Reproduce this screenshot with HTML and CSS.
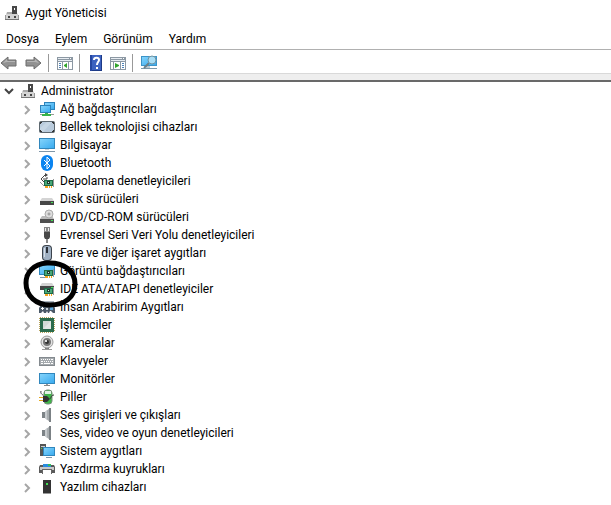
FILE: index.html
```html
<!DOCTYPE html>
<html lang="tr">
<head>
    <meta charset="UTF-8">
    <meta name="viewport" content="width=device-width, initial-scale=1.0">
    <title>Aygıt Yöneticisi</title>
    <link rel="stylesheet" href="styles.css">
</head>
<body>
    <!-- shared icons -->
    <svg class="sprite" aria-hidden="true">
        <symbol id="device" viewBox="0 0 16 16">
            <path d="M8 1h5v8H8z" fill="#484848"/><path d="M10 3h1v2h-1z" fill="#fff"/>
            <path d="M3 7h5v2h5v-1l1 2H2z" fill="#aaa"/><path d="M2 9h12v5H2z" fill="#d4d4d4"/>
            <path d="M1 10h1v4H1zM14 10h1v4h-1z" fill="#999"/><path d="M1 14h14v1H1z" fill="#777"/>
            <path d="M4 11h2v2H4zM10 11h2v2h-2z" fill="#444"/>
        </symbol>
        <symbol id="chevron" viewBox="0 0 8 10">
            <path d="M2 1l4 4-4 4" fill="none" stroke="#a6a6a6" stroke-width="2"/>
        </symbol>
        <symbol id="arrow" viewBox="0 0 18 16">
            <path d="M1 8l7-6v3h8v6H8v3z" fill="#929292" stroke="#6c6c6c" stroke-linejoin="round"/>
            <path d="M3 8l4-4v2h8v1H7z" fill="#b5b5b5"/>
        </symbol>
        <symbol id="speaker" viewBox="0 0 16 16">
            <path d="M3 5h3v6H3z" fill="#7d8387"/><path d="M6 5l5-4v14l-5-4z" fill="#a9aeb1"/>
            <path d="M6 5l2-2v10l-2-2z" fill="#c8cccf"/><path d="M10 1h2v14h-2z" fill="#7b8185"/>
        </symbol>
        <symbol id="card" viewBox="0 0 10 9">
            <path d="M0 1h9v6H0z" fill="#1d6b48"/><path d="M1 2h7v4H1z" fill="#49a878"/>
            <path d="M3 2h3v3H3z" fill="#1c3c30"/><path d="M4 3h1v1H4z" fill="#d7f5e4"/>
            <path d="M9 0h1v8H9z" fill="#999"/>
            <path d="M1 7h3v2H1zM5 7h1v2H5zM7 7h1v2H7z" fill="#f5a623"/>
        </symbol>
        <linearGradient id="screen" x1="0" y1="0" x2="1" y2="1">
            <stop offset="0" stop-color="#83d3fb"/><stop offset="1" stop-color="#3aabef"/>
        </linearGradient>
    </svg>

    <header class="title-bar">
        <svg class="icon"><use href="#device"/></svg>
        <h1>Aygıt Yöneticisi</h1>
    </header>

    <nav class="menu">
        <button type="button">Dosya</button>
        <button type="button">Eylem</button>
        <button type="button">Görünüm</button>
        <button type="button">Yardım</button>
    </nav>

    <div class="toolbar">
        <button type="button" aria-label="Geri"><svg class="arrow"><use href="#arrow"/></svg></button>
        <button type="button" aria-label="İleri"><svg class="arrow forward"><use href="#arrow"/></svg></button>
        <span class="separator"></span>
        <button type="button" aria-label="Konsol ağacını göster">
            <svg class="icon" viewBox="0 0 16 16">
                <path d="M0 2h16v13H0z" fill="#8c98a3"/><path d="M1 3h11v1H1zM1 5h14v1H1z" fill="#e8edf2"/>
                <path d="M13 3h1v1h-1z" fill="#fff"/><path d="M1 7h4v7H1zM6 7h5v7H6zM12 7h3v7h-3z" fill="#fff"/>
                <path d="M2 8h2v1H2zM2 10h2v1H2zM2 12h2v1H2z" fill="#4d83b8"/>
                <path d="M10 8v5l-3-2v-1z" fill="#31a52c"/>
            </svg>
        </button>
        <span class="separator"></span>
        <button type="button" aria-label="Yardım">
            <svg class="icon" viewBox="0 0 16 16">
                <path d="M2 0h12v16H2z" fill="#3c62c0"/><path d="M2 0h2v16H2z" fill="#2546a0"/>
                <path d="M13 0h1v16h-1zM4 15h10v1H4z" fill="#1d3a86"/>
                <path d="M6 5c0-3 5-3 5 0 0 2-2 2-2 5" fill="none" stroke="#fff" stroke-width="2"/>
                <path d="M8 12h2v2H8z" fill="#fff"/>
            </svg>
        </button>
        <button type="button" aria-label="Eylem bölmesini göster">
            <svg class="icon" viewBox="0 0 16 16">
                <path d="M0 2h16v13H0z" fill="#8c98a3"/><path d="M1 3h11v1H1zM1 5h14v1H1z" fill="#e8edf2"/>
                <path d="M13 3h1v1h-1z" fill="#fff"/><path d="M1 7h2v7H1zM4 7h6v7H4zM11 7h4v7h-4z" fill="#fff"/>
                <path d="M12 8h2v1h-2zM12 10h2v1h-2zM12 12h2v1h-2z" fill="#4d83b8"/>
                <path d="M5 8v5l4-2v-1z" fill="#31a52c"/>
            </svg>
        </button>
        <span class="separator"></span>
        <button type="button" aria-label="Donanım değişikliklerini tara">
            <svg class="icon" viewBox="0 0 16 16">
                <path d="M0 1h16v10H0z" fill="#3d94c8"/><path d="M1 2h14v8H1z" fill="url(#screen)"/>
                <path d="M5 11h4v2H5z" fill="#b9c8d1"/><path d="M0 13h16v1H0z" fill="#7c98aa"/>
                <path d="M8 8l-5 5" stroke="#6a7f88" stroke-width="2"/>
                <circle cx="11" cy="5" r="4" fill="#a9def6" stroke="#6f93a3"/>
            </svg>
        </button>
    </div>
    <div class="band"></div>

    <main class="tree">
        <div class="root">
            <button type="button" class="expander" aria-label="Daralt" aria-expanded="true">
                <svg class="chevron-down" viewBox="0 0 10 8"><path d="M1 1l4 4 4-4" fill="none" stroke="#444" stroke-width="2"/></svg>
            </button>
            <svg class="icon"><use href="#device"/></svg>
            <span>Administrator</span>
        </div>
        <ul>
            <li>
                <button type="button" class="expander" aria-label="Genişlet"><svg class="chevron"><use href="#chevron"/></svg></button>
                <svg class="icon" viewBox="0 0 16 16">
                    <path d="M5 1h11v8H5z" fill="#2c83bb"/><path d="M6 2h9v6H6z" fill="url(#screen)"/>
                    <path d="M1 4h11v8H1z" fill="#2c83bb"/><path d="M2 5h9v6H2z" fill="url(#screen)"/>
                    <path d="M6 12h3v1h3v2H3v-2h3z" fill="#37b34a"/><path d="M1 13h2v1H1zM12 13h3v1h-3z" fill="#999"/>
                </svg>
                <span>Ağ bağdaştırıcıları</span>
            </li>
            <li>
                <button type="button" class="expander" aria-label="Genişlet"><svg class="chevron"><use href="#chevron"/></svg></button>
                <svg class="icon" viewBox="0 0 16 16">
                    <rect x="0" y="2" width="16" height="12" rx="2" fill="#5d6870"/><path d="M1 3h14v10H1z" fill="#b9cbdc"/>
                    <path d="M1 9l7-6h5l-9 10H1z" fill="#c6d6e4"/>
                    <path d="M1 3h2v1H2v1H1zM13 3h2v2h-1V4h-1zM1 11h1v1h1v1H1zM14 11h1v2h-2v-1h1z" fill="#333"/>
                </svg>
                <span>Bellek teknolojisi cihazları</span>
            </li>
            <li>
                <button type="button" class="expander" aria-label="Genişlet"><svg class="chevron"><use href="#chevron"/></svg></button>
                <svg class="icon" viewBox="0 0 16 16">
                    <path d="M0 1h16v11H0z" fill="#3187bd"/><path d="M1 2h14v9H1z" fill="url(#screen)"/>
                    <path d="M6 12h4v1H6z" fill="#cad3d9"/><path d="M0 14h16v1H0z" fill="#7f96a8"/>
                </svg>
                <span>Bilgisayar</span>
            </li>
            <li>
                <button type="button" class="expander" aria-label="Genişlet"><svg class="chevron"><use href="#chevron"/></svg></button>
                <svg class="icon" viewBox="0 0 16 16">
                    <rect x="2" y="0" width="12" height="16" rx="6" fill="#0a84f0"/>
                    <path d="M5 5l6 6-3 3V2l3 3-6 6" fill="none" stroke="#fff"/>
                </svg>
                <span>Bluetooth</span>
            </li>
            <li>
                <button type="button" class="expander" aria-label="Genişlet"><svg class="chevron"><use href="#chevron"/></svg></button>
                <svg class="icon" viewBox="0 0 16 16">
                    <path d="M7 1L2 6l4 4M4 6h4V4" fill="none" stroke="#444"/>
                    <path d="M6 0l3 2-3 2z" fill="#444"/><path d="M1 9l4 4" fill="none" stroke="#999"/>
                    <use href="#card" x="5" y="6" width="10" height="9"/>
                </svg>
                <span>Depolama denetleyicileri</span>
            </li>
            <li>
                <button type="button" class="expander" aria-label="Genişlet"><svg class="chevron"><use href="#chevron"/></svg></button>
                <svg class="icon" viewBox="0 0 16 16">
                    <path d="M3 7h10l2 3H1z" fill="#d4d4d4"/><path d="M1 10h14v4H1z" fill="#464646"/><path d="M12 11h2v1h-2z" fill="#41df54"/>
                </svg>
                <span>Disk sürücüleri</span>
            </li>
            <li>
                <button type="button" class="expander" aria-label="Genişlet"><svg class="chevron"><use href="#chevron"/></svg></button>
                <svg class="icon" viewBox="0 0 16 16">
                    <path d="M3 7h10l2 3H1z" fill="#bbb"/><circle cx="10" cy="5" r="4" fill="#ddd" stroke="#aaa"/>
                    <circle cx="10" cy="5" r="1" fill="#fff" stroke="#888"/>
                    <path d="M1 10h14v4H1z" fill="#505050"/><path d="M12 11h2v1h-2z" fill="#41df54"/>
                </svg>
                <span>DVD/CD-ROM sürücüleri</span>
            </li>
            <li>
                <button type="button" class="expander" aria-label="Genişlet"><svg class="chevron"><use href="#chevron"/></svg></button>
                <svg class="icon" viewBox="0 0 16 16">
                    <path d="M5 0h6v5H5z" fill="#888"/><path d="M6 1h1v3H6zM9 1h1v3H9z" fill="#eee"/>
                    <path d="M5 5h6v5l-1 2H6l-1-2z" fill="#484848"/><path d="M7 12h2v4H7z" fill="#888"/>
                </svg>
                <span>Evrensel Seri Veri Yolu denetleyicileri</span>
            </li>
            <li>
                <button type="button" class="expander" aria-label="Genişlet"><svg class="chevron"><use href="#chevron"/></svg></button>
                <svg class="icon" viewBox="0 0 16 16">
                    <rect x="3" y="0" width="10" height="16" rx="4" fill="#3c434c"/>
                    <rect x="4" y="1" width="8" height="14" rx="3" fill="#9fb0c3"/>
                    <path d="M5 3h1v9H5z" fill="#d5dde5"/><path d="M7 2h2v6H7z" fill="#2b3038"/>
                </svg>
                <span>Fare ve diğer işaret aygıtları</span>
            </li>
            <li class="marked">
                <button type="button" class="expander" aria-label="Genişlet"><svg class="chevron"><use href="#chevron"/></svg></button>
                <svg class="icon" viewBox="0 0 16 16">
                    <path d="M0 1h16v11H0z" fill="#3187bd"/><path d="M1 2h14v9H1z" fill="url(#screen)"/>
                    <path d="M1 14h6v1H1z" fill="#7f96a8"/><use href="#card" x="5" y="6" width="10" height="9"/>
                </svg>
                <span>Görüntü bağdaştırıcıları</span>
                <!-- hand drawn mark -->
                <svg class="mark" viewBox="0 0 56 50">
                    <path d="M25 4C11 5 4 14 4 24c0 13 10 22 24 22 15 0 25-8 25-21C53 12 42 3 25 4z" fill="none" stroke="#000" stroke-width="5"/>
                </svg>
            </li>
            <li>
                <button type="button" class="expander" aria-label="Genişlet"><svg class="chevron"><use href="#chevron"/></svg></button>
                <svg class="icon" viewBox="0 0 16 16">
                    <path d="M3 2h10l2 3H1z" fill="#d4d4d4"/><path d="M1 5h14v4H1z" fill="#464646"/><path d="M12 6h2v1h-2z" fill="#41df54"/>
                    <use href="#card" x="5" y="6" width="10" height="9"/>
                </svg>
                <span>IDE ATA/ATAPI denetleyiciler</span>
            </li>
            <li>
                <button type="button" class="expander" aria-label="Genişlet"><svg class="chevron"><use href="#chevron"/></svg></button>
                <svg class="icon" viewBox="0 0 16 16">
                    <path d="M1 2h14v5H1z" fill="#a8b2bd"/><path d="M0 14V9l2-3h4l2 2 2-2h4l2 3v5h-2l-2-2h-1l-1 2H9l-1-2-1 2H5l-1-2-2 2z" fill="#4b5968"/>
                    <path d="M3 8h1v3H3zM2 9h3v1H2z" fill="#fff"/><path d="M7 9h2v2H7z" fill="#c8d0d8"/><path d="M11 8h3v3h-3z" fill="#5da5d8"/>
                </svg>
                <span>İnsan Arabirim Aygıtları</span>
            </li>
            <li>
                <button type="button" class="expander" aria-label="Genişlet"><svg class="chevron"><use href="#chevron"/></svg></button>
                <svg class="icon" viewBox="0 0 16 16">
                    <path d="M1 1h14v14H1z" fill="#2b6b4c"/><path d="M4 4h8v8H4z" fill="#d3dad6"/><path d="M4 12l8-8v8z" fill="#e3e7e5"/>
                    <path d="M1 0h14M1 16h14M0 1v14M16 1v14" stroke="#b7a35d" stroke-width="2" stroke-dasharray="1 1"/>
                </svg>
                <span>İşlemciler</span>
            </li>
            <li>
                <button type="button" class="expander" aria-label="Genişlet"><svg class="chevron"><use href="#chevron"/></svg></button>
                <svg class="icon" viewBox="0 0 16 16">
                    <path d="M6 12h4v2H6z" fill="#777"/><circle cx="8" cy="7" r="6" fill="#e2e2e2" stroke="#999"/>
                    <circle cx="8" cy="7" r="3" fill="#333" stroke="#777" stroke-width="2"/><path d="M6 5h2v2H6z" fill="#ddd"/>
                    <path d="M3 14h10v1H3z" fill="#999"/>
                </svg>
                <span>Kameralar</span>
            </li>
            <li>
                <button type="button" class="expander" aria-label="Genişlet"><svg class="chevron"><use href="#chevron"/></svg></button>
                <svg class="icon" viewBox="0 0 16 16">
                    <path d="M0 4h16v9H0z" fill="#848a8f"/><path d="M1 5h14v7H1z" fill="#a5aaae"/>
                    <path d="M2 6h1v1H2zM4 6h1v1H4zM6 6h1v1H6zM8 6h1v1H8zM10 6h1v1h-1zM12 6h2v1h-2zM2 8h2v1H2zM5 8h1v1H5zM7 8h1v1H7zM9 8h1v1H9zM11 8h1v1h-1zM13 8h1v1h-1zM2 10h2v1H2zM5 10h6v1H5zM12 10h2v1h-2z" fill="#fff"/>
                </svg>
                <span>Klavyeler</span>
            </li>
            <li>
                <button type="button" class="expander" aria-label="Genişlet"><svg class="chevron"><use href="#chevron"/></svg></button>
                <svg class="icon" viewBox="0 0 16 16">
                    <path d="M0 2h16v11H0z" fill="#3187bd"/><path d="M1 3h14v9H1z" fill="url(#screen)"/>
                    <path d="M7 13h2v1H7z" fill="#999"/><path d="M5 14h6v1H5z" fill="#888"/>
                </svg>
                <span>Monitörler</span>
            </li>
            <li>
                <button type="button" class="expander" aria-label="Genişlet"><svg class="chevron"><use href="#chevron"/></svg></button>
                <svg class="icon" viewBox="0 0 16 16">
                    <path d="M2 2c-1 3 2 4 4 5" fill="none" stroke="#444"/>
                    <rect x="5" y="1" width="8" height="14" rx="3" fill="#3fb649" stroke="#7b8f7d"/><path d="M6 2h6v3H6z" fill="#e2f3e4"/>
                    <path d="M0 8h5v1H0zM0 11h5v1H0z" fill="#e4a91d"/><path d="M4 7h4l2 2v2l-2 2H4z" fill="#333"/>
                    <path d="M10 10c3 0 1-4 5-4" fill="none" stroke="#333"/>
                </svg>
                <span>Piller</span>
            </li>
            <li>
                <button type="button" class="expander" aria-label="Genişlet"><svg class="chevron"><use href="#chevron"/></svg></button>
                <svg class="icon"><use href="#speaker"/></svg>
                <span>Ses girişleri ve çıkışları</span>
            </li>
            <li>
                <button type="button" class="expander" aria-label="Genişlet"><svg class="chevron"><use href="#chevron"/></svg></button>
                <svg class="icon"><use href="#speaker"/></svg>
                <span>Ses, video ve oyun denetleyicileri</span>
            </li>
            <li>
                <button type="button" class="expander" aria-label="Genişlet"><svg class="chevron"><use href="#chevron"/></svg></button>
                <svg class="icon" viewBox="0 0 16 16">
                    <path d="M1 1h6v12H1z" fill="#555"/><path d="M2 3h4v1H2z" fill="#ccc"/><path d="M2 5h1v1H2z" fill="#42de52"/>
                    <path d="M4 4h12v9H4z" fill="#3187bd"/><path d="M5 5h10v7H5z" fill="url(#screen)"/><path d="M7 14h6v1H7z" fill="#7f96a8"/>
                </svg>
                <span>Sistem aygıtları</span>
            </li>
            <li>
                <button type="button" class="expander" aria-label="Genişlet"><svg class="chevron"><use href="#chevron"/></svg></button>
                <svg class="icon" viewBox="0 0 16 16">
                    <path d="M1 4h14l1 2v6H0V6z" fill="#5a5a5a"/><path d="M1 6h14v3H1z" fill="#c9c9c9"/>
                    <path d="M4 3h8v3H4z" fill="#2a8ce0"/><path d="M9 3h3v2H9z" fill="#35bd5c"/>
                    <path d="M3 8h10v5H3z" fill="#666"/><path d="M4 9h8v4H4z" fill="#fff"/>
                </svg>
                <span>Yazdırma kuyrukları</span>
            </li>
            <li>
                <button type="button" class="expander" aria-label="Genişlet"><svg class="chevron"><use href="#chevron"/></svg></button>
                <svg class="icon" viewBox="0 0 16 16">
                    <path d="M4 1h8v13H4z" fill="#333"/><path d="M7 4h2v2H7z" fill="#42de52"/><path d="M4 14h8v1H4z" fill="#999"/>
                </svg>
                <span>Yazılım cihazları</span>
            </li>
        </ul>
    </main>
</body>
</html>
```
FILE: styles.css
```css
body {
    margin: 0;
    background: #fff;
    color: #000;
    font-family: Roboto, "Open Sans", sans-serif;
    font-size: 12px;
    line-height: 18px;
}
button {
    padding: 0;
    border: 0;
    background: none;
    color: inherit;
    font: inherit;
}
svg {
    display: block;
    flex: none;
}
.sprite {
    position: absolute;
    width: 0;
    height: 0;
}
.icon {
    width: 16px;
    height: 16px;
}
.title-bar {
    display: flex;
    align-items: center;
    gap: 5px;
    height: 26px;
    padding-left: 4px;
}
h1 {
    margin: 0;
    font-size: 12px;
    font-weight: normal;
}
.menu {
    display: flex;
    gap: 16px;
    height: 24px;
    padding: 2px 0 0 6px;
    box-sizing: border-box;
    border-bottom: 1px solid #b0b0b0;
}
.toolbar {
    display: flex;
    align-items: center;
    height: 23px;
    padding-top: 3px;
    box-sizing: border-box;
}
.arrow {
    width: 18px;
    height: 16px;
}
.forward {
    transform: scaleX(-1);
}
.toolbar button + button {
    margin-left: 6px;
}
.separator {
    width: 1px;
    height: 18px;
    margin: 0 8px 0 6px;
    background: #999;
}
.band {
    height: 6px;
    border-top: 1px solid #d9d9d9;
    border-bottom: 2px solid #696969;
    background: #eee;
}
.root, li {
    display: flex;
    align-items: center;
    height: 18px;
    white-space: nowrap;
}
.root {
    padding-left: 4px;
}
.expander {
    display: flex;
    width: 16px;
    padding-top: 2px;
}
.root .icon, li .icon {
    margin-right: 5px;
}
.chevron {
    width: 8px;
    height: 10px;
}
.chevron-down {
    width: 10px;
    height: 8px;
}
ul {
    margin: 0;
    padding: 0 0 0 23px;
    list-style: none;
}
.marked {
    position: relative;
}
/* circle lies over the neighbouring rows */
.mark {
    position: absolute;
    left: -1px;
    top: -3px;
    width: 56px;
    height: 50px;
}
```
